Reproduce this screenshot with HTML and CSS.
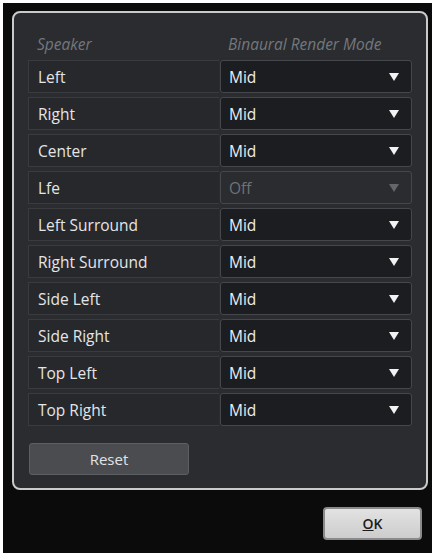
FILE: index.html
```html
<!DOCTYPE html>
<html lang="en">
<head>
    <meta charset="UTF-8">
    <meta name="viewport" content="width=device-width, initial-scale=1.0">
    <title>Binaural Render Mode</title>
    <link rel="stylesheet" href="styles.css">
</head>
<body>
    <div class="dialog">
        <div class="panel">
            <div class="header">
                <div class="head-cell">Speaker</div>
                <div class="head-cell">Binaural Render Mode</div>
            </div>
            <div class="rows">
                <div class="row"><div class="name">Left</div><div class="select"><span>Mid</span><i class="arrow"></i></div></div>
                <div class="row"><div class="name">Right</div><div class="select"><span>Mid</span><i class="arrow"></i></div></div>
                <div class="row"><div class="name">Center</div><div class="select"><span>Mid</span><i class="arrow"></i></div></div>
                <div class="row"><div class="name">Lfe</div><div class="select disabled"><span>Off</span><i class="arrow"></i></div></div>
                <div class="row"><div class="name">Left Surround</div><div class="select"><span>Mid</span><i class="arrow"></i></div></div>
                <div class="row"><div class="name">Right Surround</div><div class="select"><span>Mid</span><i class="arrow"></i></div></div>
                <div class="row"><div class="name">Side Left</div><div class="select"><span>Mid</span><i class="arrow"></i></div></div>
                <div class="row"><div class="name">Side Right</div><div class="select"><span>Mid</span><i class="arrow"></i></div></div>
                <div class="row"><div class="name">Top Left</div><div class="select"><span>Mid</span><i class="arrow"></i></div></div>
                <div class="row"><div class="name">Top Right</div><div class="select"><span>Mid</span><i class="arrow"></i></div></div>
            </div>
            <button class="reset">Reset</button>
        </div>
        <div class="footer">
            <button class="ok"><u>O</u>K</button>
        </div>
    </div>
</body>
</html>
```

FILE: styles.css
```css
body {
    margin: 0;
    background-color: #fff;
    font-family: "Open Sans", Arial, sans-serif;
}

.dialog {
    width: 429px;
    height: 550px;
    margin: 3px 0 0 3px;
    background-color: #0b0b0c;
    padding: 8px 0 0 9px;
    box-sizing: border-box;
}

.panel {
    width: 416px;
    height: 479px;
    box-sizing: border-box;
    border: 2px solid #c9cacc;
    border-radius: 8px;
    background-color: #2a2c30;
    padding: 21px 14px 14px;
}

.header {
    display: grid;
    grid-template-columns: 191px 1fr;
    gap: 1px;
    height: 20px;
    margin-bottom: 6px;
}

.head-cell {
    font-size: 15.5px;
    font-style: italic;
    line-height: 20px;
    color: #74777c;
    padding-left: 9px;
}

.head-cell + .head-cell {
    padding-left: 8px;
}

.rows {
    display: flex;
    flex-direction: column;
    gap: 4px;
}

.row {
    display: grid;
    grid-template-columns: 191px 1fr;
    gap: 1px;
    height: 33px;
}

.name {
    display: flex;
    align-items: center;
    padding-left: 9px;
    font-size: 15.5px;
    font-weight: 500;
    color: #e4e5e7;
    background-color: #26282b;
    border: 1px solid #393b3f;
    border-right: none;
}

.select {
    display: flex;
    align-items: center;
    justify-content: space-between;
    padding: 0 12px 0 8px;
    font-size: 15.5px;
    font-weight: 500;
    color: #eeeeef;
    background-color: #1c1d20;
    border: 1px solid #45474c;
    border-radius: 3px;
}

.arrow {
    width: 0;
    height: 0;
    border-left: 5px solid transparent;
    border-right: 5px solid transparent;
    border-top: 8px solid #f2f2f3;
}

.select.disabled {
    background-color: #2a2c30;
    color: #6f7277;
}

.select.disabled .arrow {
    border-top-color: #63666b;
}

.reset {
    display: block;
    width: 160px;
    height: 32px;
    margin: 17px 0 0 1px;
    background-color: #4a4c50;
    border: 1px solid #5c5e62;
    border-radius: 3px;
    color: #e2e3e5;
    font-family: "Open Sans", Arial, sans-serif;
    font-size: 15px;
    font-weight: 500;
}

.footer {
    display: flex;
    justify-content: flex-end;
    padding: 17px 10px 0 0;
}

.ok {
    width: 99px;
    height: 33px;
    background: linear-gradient(#e2e2e2, #cdcdcd);
    border: 2px solid #8a8a8c;
    border-radius: 4px;
    color: #1c1c1c;
    font-family: "Open Sans", Arial, sans-serif;
    font-size: 14px;
    font-weight: 600;
}
```
